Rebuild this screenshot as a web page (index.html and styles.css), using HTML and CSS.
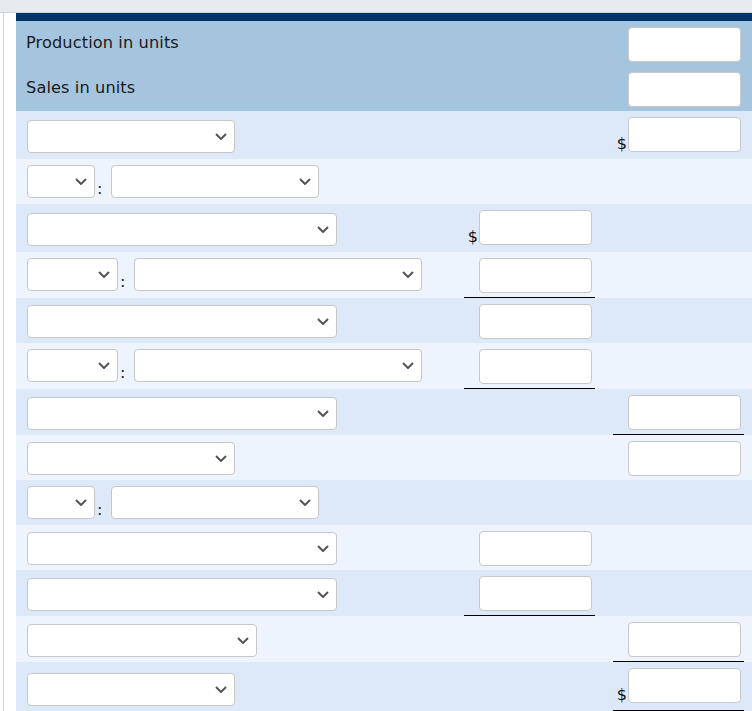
FILE: index.html
```html
<!DOCTYPE html>
<html lang="en">
<head>
<meta charset="utf-8">
<title>Production and sales worksheet</title>
<link rel="stylesheet" href="styles.css">
</head>
<body>
<div class="topbar"></div>
<div class="page">
  <div class="gutter"><div class="rule"></div></div>
  <div class="sheet">
    <div class="title"></div>

    <div class="row head">
      <div class="lab"><span class="txt">Production in units</span></div>
      <div class="c"></div><div></div>
      <div class="c"><input class="box" type="text"></div><div></div>
    </div>
    <div class="row head">
      <div class="lab"><span class="txt">Sales in units</span></div>
      <div class="c"></div><div></div>
      <div class="c"><input class="box" type="text"></div><div></div>
    </div>

    <div class="row dk h48">
      <div class="lab pt9"><div class="sel w208"><svg width="12" height="7" viewBox="0 0 12 7"><path d="M1 1 6 6 11 1"/></svg></div></div>
      <div class="c"></div><div></div>
      <div class="c"><div class="pair"><span class="dollar">$</span><input class="box" type="text"></div></div><div></div>
    </div>

    <div class="row lt h45">
      <div class="lab pt6"><div class="split"><div class="sel w68"><svg width="12" height="7" viewBox="0 0 12 7"><path d="M1 1 6 6 11 1"/></svg></div><span class="colon">:</span><div class="sel w208"><svg width="12" height="7" viewBox="0 0 12 7"><path d="M1 1 6 6 11 1"/></svg></div></div></div>
      <div class="c"></div><div></div>
      <div class="c"></div><div></div>
    </div>

    <div class="row dk h48">
      <div class="lab pt9"><div class="sel w310"><svg width="12" height="7" viewBox="0 0 12 7"><path d="M1 1 6 6 11 1"/></svg></div></div>
      <div class="c"><div class="pair"><span class="dollar">$</span><input class="box" type="text"></div></div><div></div>
      <div class="c"></div><div></div>
    </div>

    <div class="row lt h46">
      <div class="lab pt6"><div class="split"><div class="sel w91"><svg width="12" height="7" viewBox="0 0 12 7"><path d="M1 1 6 6 11 1"/></svg></div><span class="colon">:</span><div class="sel w288"><svg width="12" height="7" viewBox="0 0 12 7"><path d="M1 1 6 6 11 1"/></svg></div></div></div>
      <div class="c ul"><input class="box" type="text"></div><div></div>
      <div class="c"></div><div></div>
    </div>

    <div class="row dk h45">
      <div class="lab pt7"><div class="sel w310"><svg width="12" height="7" viewBox="0 0 12 7"><path d="M1 1 6 6 11 1"/></svg></div></div>
      <div class="c"><input class="box" type="text"></div><div></div>
      <div class="c"></div><div></div>
    </div>

    <div class="row lt h46">
      <div class="lab pt6"><div class="split"><div class="sel w91"><svg width="12" height="7" viewBox="0 0 12 7"><path d="M1 1 6 6 11 1"/></svg></div><span class="colon">:</span><div class="sel w288"><svg width="12" height="7" viewBox="0 0 12 7"><path d="M1 1 6 6 11 1"/></svg></div></div></div>
      <div class="c ul"><input class="box" type="text"></div><div></div>
      <div class="c"></div><div></div>
    </div>

    <div class="row dk h46">
      <div class="lab pt8"><div class="sel w310"><svg width="12" height="7" viewBox="0 0 12 7"><path d="M1 1 6 6 11 1"/></svg></div></div>
      <div class="c"></div><div></div>
      <div class="c ul"><input class="box" type="text"></div><div></div>
    </div>

    <div class="row lt h45">
      <div class="lab pt7"><div class="sel w208"><svg width="12" height="7" viewBox="0 0 12 7"><path d="M1 1 6 6 11 1"/></svg></div></div>
      <div class="c"></div><div></div>
      <div class="c"><input class="box" type="text"></div><div></div>
    </div>

    <div class="row dk h45">
      <div class="lab pt6"><div class="split"><div class="sel w68"><svg width="12" height="7" viewBox="0 0 12 7"><path d="M1 1 6 6 11 1"/></svg></div><span class="colon">:</span><div class="sel w208"><svg width="12" height="7" viewBox="0 0 12 7"><path d="M1 1 6 6 11 1"/></svg></div></div></div>
      <div class="c"></div><div></div>
      <div class="c"></div><div></div>
    </div>

    <div class="row lt h45">
      <div class="lab pt7"><div class="sel w310"><svg width="12" height="7" viewBox="0 0 12 7"><path d="M1 1 6 6 11 1"/></svg></div></div>
      <div class="c"><input class="box" type="text"></div><div></div>
      <div class="c"></div><div></div>
    </div>

    <div class="row dk h46">
      <div class="lab pt8"><div class="sel w310"><svg width="12" height="7" viewBox="0 0 12 7"><path d="M1 1 6 6 11 1"/></svg></div></div>
      <div class="c ul"><input class="box" type="text"></div><div></div>
      <div class="c"></div><div></div>
    </div>

    <div class="row lt h46">
      <div class="lab pt8"><div class="sel w230"><svg width="12" height="7" viewBox="0 0 12 7"><path d="M1 1 6 6 11 1"/></svg></div></div>
      <div class="c"></div><div></div>
      <div class="c ul"><input class="box" type="text"></div><div></div>
    </div>

    <div class="row dk h49">
      <div class="lab pt11"><div class="sel w208"><svg width="12" height="7" viewBox="0 0 12 7"><path d="M1 1 6 6 11 1"/></svg></div></div>
      <div class="c"></div><div></div>
      <div class="c ul"><div class="pair"><span class="dollar">$</span><input class="box" type="text"></div></div><div></div>
    </div>
  </div>
</div>
</body>
</html>
```

FILE: styles.css
```css
html, body {
  margin: 0;
  padding: 0;
}
body {
  width: 752px;
  background: #ffffff;
  font-family: "DejaVu Sans", Verdana, sans-serif;
  color: #1e1e1e;
  overflow: hidden;
}
.topbar {
  height: 12px;
  background: #e6ebef;
  border-bottom: 1px solid #cbd4de;
}
.page {
  display: flex;
}
.gutter {
  width: 16px;
  flex: none;
  padding-left: 3px;
  box-sizing: border-box;
  display: flex;
}
.rule {
  width: 1px;
  background: #c9d6e6;
}
.sheet {
  flex: 1;
}
.title {
  height: 8px;
  background: #003366;
}
.row {
  display: grid;
  grid-template-columns: 448px 131px 18px 131px 1fr;
}
.head {
  background: #a5c5de;
  height: 45px;
}
.dk {
  background: #dde8f8;
}
.lt {
  background: #edf4fe;
}
.h45 { height: 45px; }
.h46 { height: 46px; }
.h48 { height: 48px; }
.h49 { height: 49px; }

.lab {
  display: flex;
  align-items: flex-start;
  padding-left: 11px;
  box-sizing: border-box;
}
.pt6 { padding-top: 6px; }
.pt7 { padding-top: 7px; }
.pt8 { padding-top: 8px; }
.pt9 { padding-top: 9px; }
.pt11 { padding-top: 11px; }

.txt {
  padding: 12px 0 0 0;
  margin-left: -1px;
  font-size: 16.2px;
  letter-spacing: 0.1px;
  line-height: 19px;
  color: #1a1a1a;
}

.split {
  display: flex;
  align-items: flex-end;
}
.colon {
  width: 16px;
  padding-left: 2px;
  box-sizing: border-box;
  font-size: 16px;
  line-height: 16px;
  margin-bottom: 1px;
  color: #222;
}

.sel {
  height: 33px;
  box-sizing: border-box;
  background: #ffffff;
  border: 1px solid #c7c7c7;
  border-radius: 4px;
  display: flex;
  align-items: center;
  justify-content: flex-end;
  padding-right: 7px;
}
.sel svg {
  display: block;
}
.sel path {
  fill: none;
  stroke: #555555;
  stroke-width: 2;
}
.w68 { width: 68px; }
.w91 { width: 91px; }
.w208 { width: 208px; }
.w230 { width: 230px; }
.w288 { width: 288px; }
.w310 { width: 310px; }

.c {
  display: flex;
  justify-content: flex-end;
  align-items: flex-start;
  padding: 6px 3px 0 0;
  box-sizing: border-box;
}
.ul {
  border-bottom: 1px solid #000000;
}
.pair {
  display: flex;
  align-items: flex-end;
}
.dollar {
  font-size: 16px;
  line-height: 16px;
  margin-right: 1px;
  color: #111;
}
.box {
  display: block;
  width: 113px;
  height: 35px;
  box-sizing: border-box;
  margin: 0;
  padding: 0 6px;
  border: 1px solid #c8c8c8;
  border-radius: 4px;
  background: #ffffff;
  font: 14px "DejaVu Sans", Verdana, sans-serif;
}
```
